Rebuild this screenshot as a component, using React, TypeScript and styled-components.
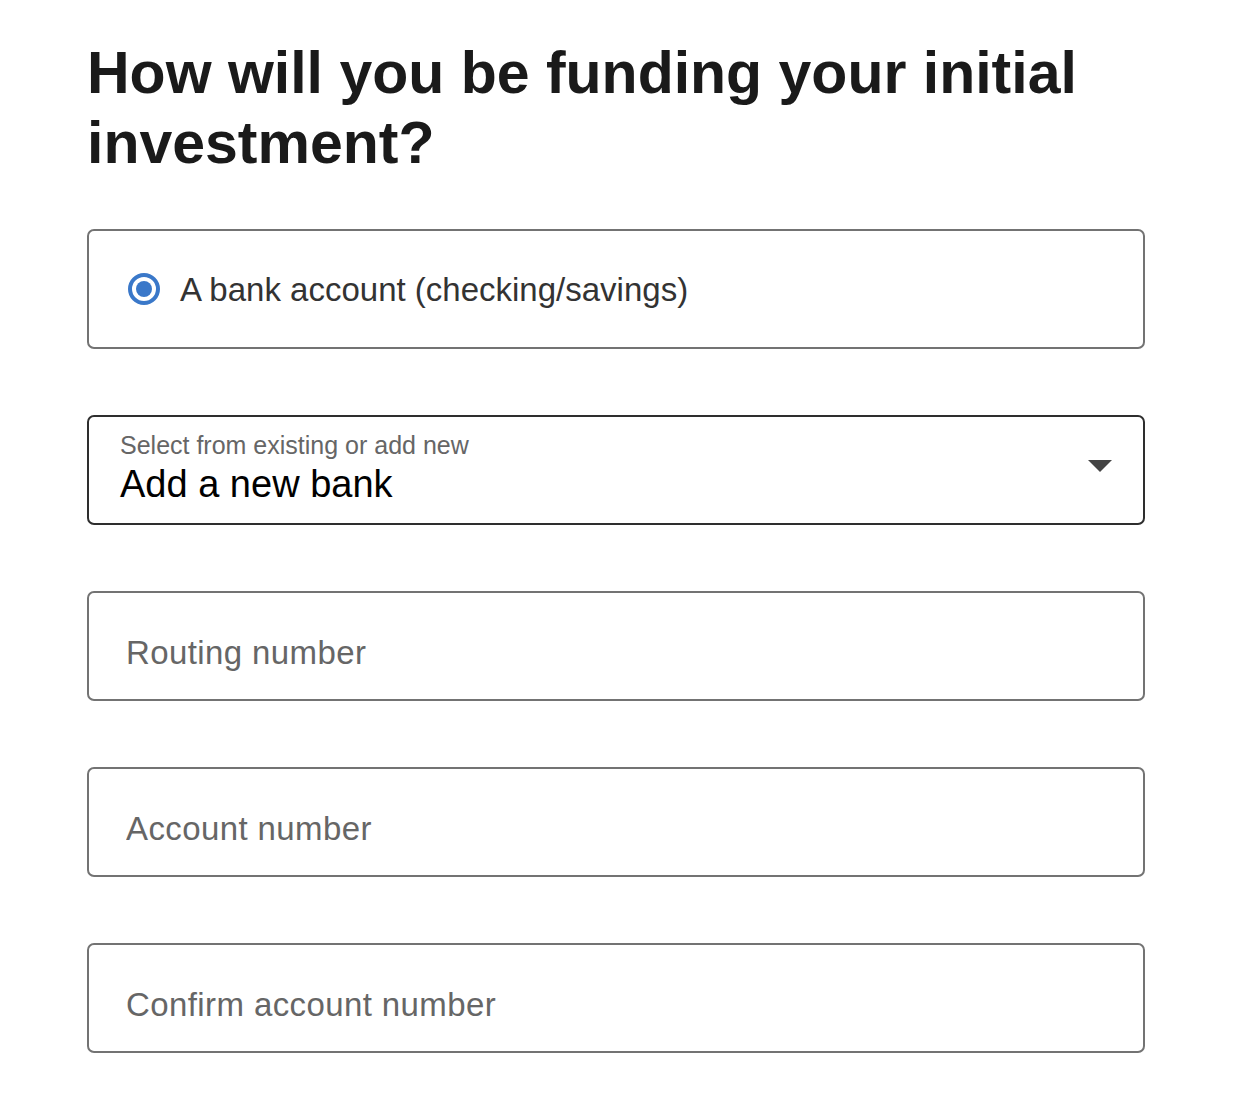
import * as React from 'react'
import styled, { createGlobalStyle } from 'styled-components'

const GlobalStyle = createGlobalStyle`
  body {
    margin: 0;
    background: #ffffff;
    font-family: "Liberation Sans", Arial, sans-serif;
  }
`

const Page = styled.main`
  width: 1058px;
  padding: 38px 0 52px 87px;
  display: flex;
  flex-direction: column;
`

const Title = styled.h1`
  margin: 0 0 51px;
  font-size: 59px;
  line-height: 70px;
  font-weight: 700;
  color: #1a1a1a;
  width: 1040px;
`

const Fields = styled.div`
  display: flex;
  flex-direction: column;
  gap: 66px;
`

const OptionCard = styled.label`
  box-sizing: border-box;
  height: 120px;
  border: 2px solid #737373;
  border-radius: 7px;
  padding: 0 39px;
  display: flex;
  align-items: center;
  gap: 20px;
  cursor: pointer;
`

const Radio = styled.span<{ checked: boolean }>`
  box-sizing: border-box;
  flex: none;
  width: 32px;
  height: 32px;
  border-radius: 50%;
  border: 4px solid #3a78c9;
  display: flex;
  align-items: center;
  justify-content: center;

  &::after {
    content: '';
    width: 16px;
    height: 16px;
    border-radius: 50%;
    background: #3a78c9;
    display: ${(p) => (p.checked ? 'block' : 'none')};
  }
`

const OptionText = styled.span`
  font-size: 33px;
  color: #333333;
  padding-top: 2px;
`

const SelectBox = styled.div`
  box-sizing: border-box;
  height: 110px;
  border: 2px solid #2e2e2e;
  border-radius: 7px;
  padding: 14px 31px 0 31px;
  display: flex;
  align-items: flex-start;
  justify-content: space-between;
`

const SelectText = styled.div`
  display: flex;
  flex-direction: column;
  gap: 5px;
`

const SelectLabel = styled.span`
  font-size: 25px;
  line-height: 28px;
  color: #666666;
`

const SelectValue = styled.span`
  font-size: 38px;
  line-height: 40px;
  color: #000000;
`

const Caret = styled.svg`
  flex: none;
  margin-top: 29px;
`

const TextInput = styled.input`
  box-sizing: border-box;
  height: 110px;
  width: 100%;
  border: 2px solid #737373;
  border-radius: 7px;
  padding: 14px 37px 0;
  font-family: inherit;
  font-size: 33px;
  letter-spacing: 0.4px;
  color: #1a1a1a;
  background: transparent;
  outline: none;

  &::placeholder {
    color: #666666;
  }
`

const fields = ['Routing number', 'Account number', 'Confirm account number']

export default function App() {
  return (
    <>
      <GlobalStyle />
      <Page>
        <Title>How will you be funding your initial investment?</Title>
        <Fields>
          <OptionCard>
            <Radio checked />
            <OptionText>A bank account (checking/savings)</OptionText>
          </OptionCard>
          <SelectBox>
            <SelectText>
              <SelectLabel>Select from existing or add new</SelectLabel>
              <SelectValue>Add a new bank</SelectValue>
            </SelectText>
            <Caret width="24" height="12" viewBox="0 0 24 12">
              <path d="M0 0 H24 L12 12 Z" fill="#444444" />
            </Caret>
          </SelectBox>
          {fields.map((f) => (
            <TextInput key={f} placeholder={f} />
          ))}
        </Fields>
      </Page>
    </>
  )
}
